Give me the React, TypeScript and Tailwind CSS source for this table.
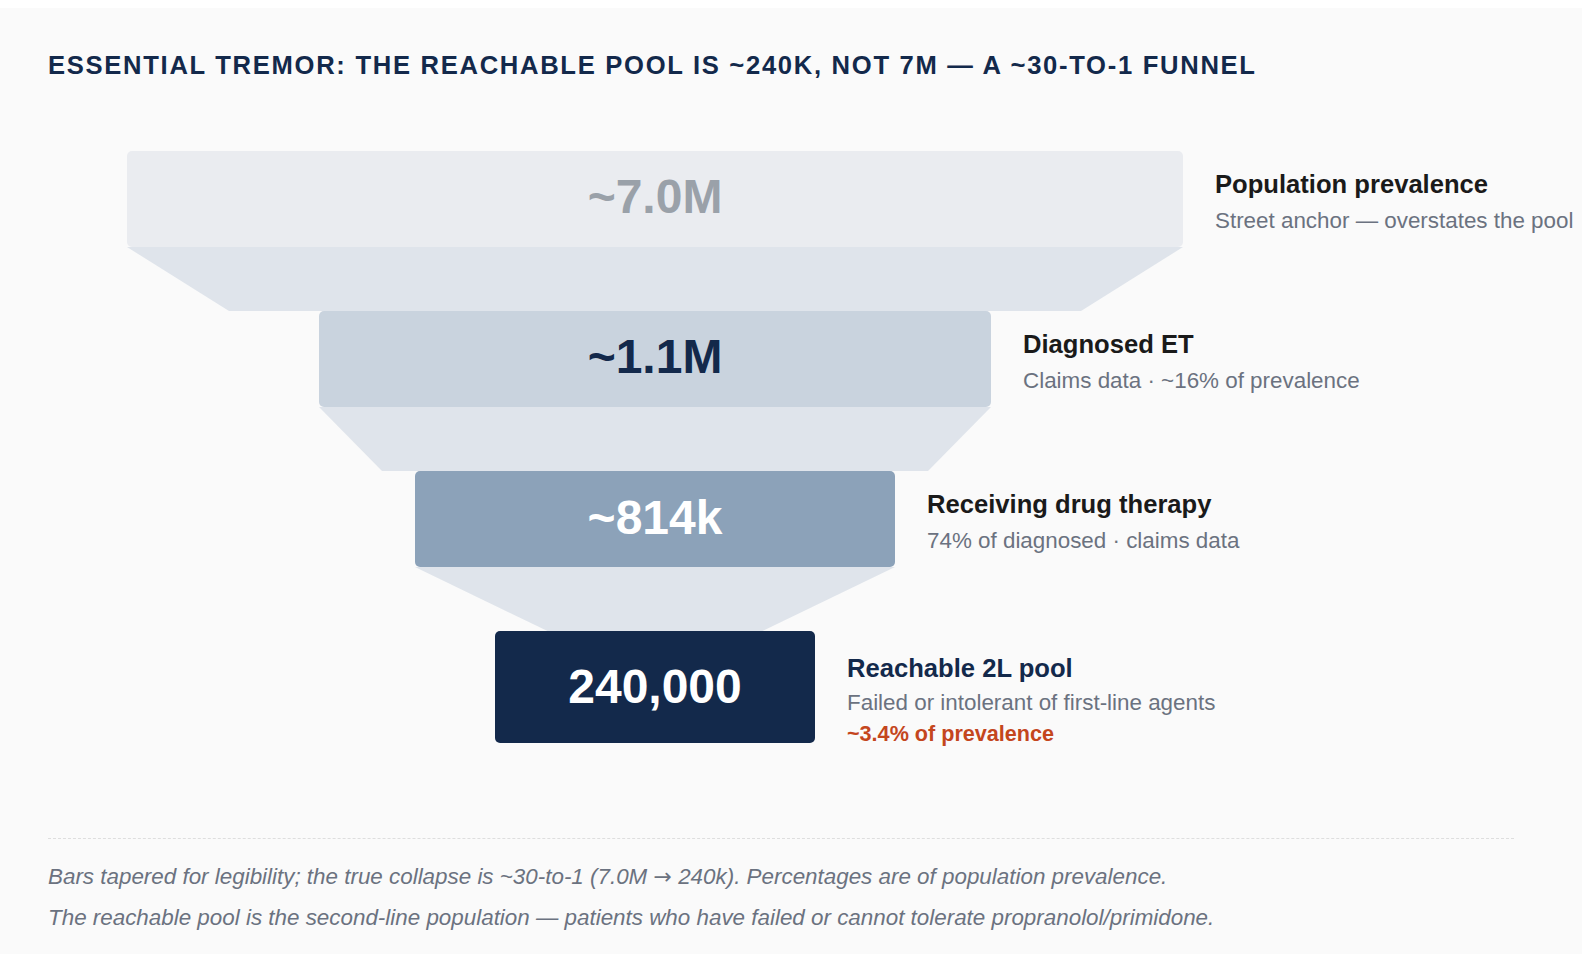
import React from 'react';

interface Stage {
  value: string;
  rowClass: string;
  barClass: string;
  title: string;
  titleClass: string;
  sub: string;
  note?: string;
  labelPad: string;
}

const stages: Stage[] = [
  {
    value: '~7.0M',
    rowClass: 'h-[96px]',
    barClass: 'w-[1056px] h-[96px] pb-[4px] bg-[#eaecf0] text-[#9aa1a9]',
    title: 'Population prevalence',
    titleClass: 'text-[#1a1a1a]',
    sub: 'Street anchor — overstates the pool',
    labelPad: 'pt-[17px]',
  },
  {
    value: '~1.1M',
    rowClass: 'h-[96px]',
    barClass: 'w-[672px] h-[96px] pb-[4px] bg-[#c9d3de] text-[#13294b]',
    title: 'Diagnosed ET',
    titleClass: 'text-[#1a1a1a]',
    sub: 'Claims data · ~16% of prevalence',
    labelPad: 'pt-[17px]',
  },
  {
    value: '~814k',
    rowClass: 'h-[96px]',
    barClass: 'w-[480px] h-[96px] pb-[3px] bg-[#8ca2b9] text-white',
    title: 'Receiving drug therapy',
    titleClass: 'text-[#1a1a1a]',
    sub: '74% of diagnosed · claims data',
    labelPad: 'pt-[17px]',
  },
  {
    value: '240,000',
    rowClass: 'h-[112px]',
    barClass: 'w-[320px] h-[112px] pb-[1px] bg-[#13294b] text-white',
    title: 'Reachable 2L pool',
    titleClass: 'text-[#13294b]',
    sub: 'Failed or intolerant of first-line agents',
    note: '~3.4% of prevalence',
    labelPad: 'pt-[21px]',
  },
];

// top / bottom widths of the tapers between bars
const tapers: [number, number][] = [
  [1056, 852],
  [672, 546],
  [480, 215],
];

const FUNNEL_W = 1214;
const MID = FUNNEL_W / 2;

const Taper: React.FC<{ top: number; bottom: number }> = ({ top, bottom }) => {
  const pts = [
    [MID - top / 2, 0],
    [MID + top / 2, 0],
    [MID + bottom / 2, 64],
    [MID - bottom / 2, 64],
  ]
    .map((p) => p.join(','))
    .join(' ');
  return (
    <svg width={FUNNEL_W} height={64} viewBox={`0 0 ${FUNNEL_W} 64`} className="block">
      <polygon points={pts} fill="#dfe4eb" />
    </svg>
  );
};

const StageRow: React.FC<{ stage: Stage }> = ({ stage }) => (
  <div className={`grid grid-cols-[minmax(0,1fr)_auto_minmax(0,1fr)] items-start ${stage.rowClass}`}>
    <div />
    <div
      className={`${stage.barClass} rounded-[5px] flex items-center justify-center text-[48px] font-bold leading-none`}
    >
      {stage.value}
    </div>
    <div className={`pl-8 whitespace-nowrap ${stage.labelPad}`}>
      <div className={`text-[25.6px] font-bold leading-[32px] ${stage.titleClass}`}>{stage.title}</div>
      <div className={`text-[22.4px] leading-[32px] text-[#6b7280] ${stage.note ? 'mt-[3px]' : 'mt-[5px]'}`}>
        {stage.sub}
      </div>
      {stage.note && (
        <div className="mt-[1px] text-[21.6px] font-bold leading-[28px] text-[#c4461d]">{stage.note}</div>
      )}
    </div>
  </div>
);

export default function App() {
  return (
    <div className="min-h-screen bg-white pt-2 pr-[6px] font-['Liberation_Sans',Arial,sans-serif]">
      <div className="bg-[#fafafa] min-h-[946px] pl-12 pr-[68px] pt-[44px]">
        <h1 className="text-[25.6px] leading-[26px] font-bold tracking-[1.7px] text-[#13294b] uppercase whitespace-nowrap">
          Essential tremor: the reachable pool is ~240K, not 7M — a ~30-to-1 funnel
        </h1>

        <div className="mt-[73px] w-[1214px]">
          {stages.map((s, i) => (
            <React.Fragment key={s.title}>
              <StageRow stage={s} />
              {i < tapers.length && <Taper top={tapers[i][0]} bottom={tapers[i][1]} />}
            </React.Fragment>
          ))}
        </div>

        <div className="mt-[95px] border-t border-dashed border-[#dedede] pt-[22px]">
          <p className="text-[22.4px] leading-[32px] italic text-[#6b7280] whitespace-nowrap">
            Bars tapered for legibility; the true collapse is ~30-to-1 (7.0M{' '}
            <span className="font-['DejaVu_Sans',sans-serif] text-[22px]">→</span> 240k). Percentages are of
            population prevalence.
          </p>
          <p className="mt-[9px] text-[22.4px] leading-[32px] italic text-[#6b7280] whitespace-nowrap">
            The reachable pool is the second-line population — patients who have failed or cannot tolerate
            propranolol/primidone.
          </p>
        </div>
      </div>
    </div>
  );
}
